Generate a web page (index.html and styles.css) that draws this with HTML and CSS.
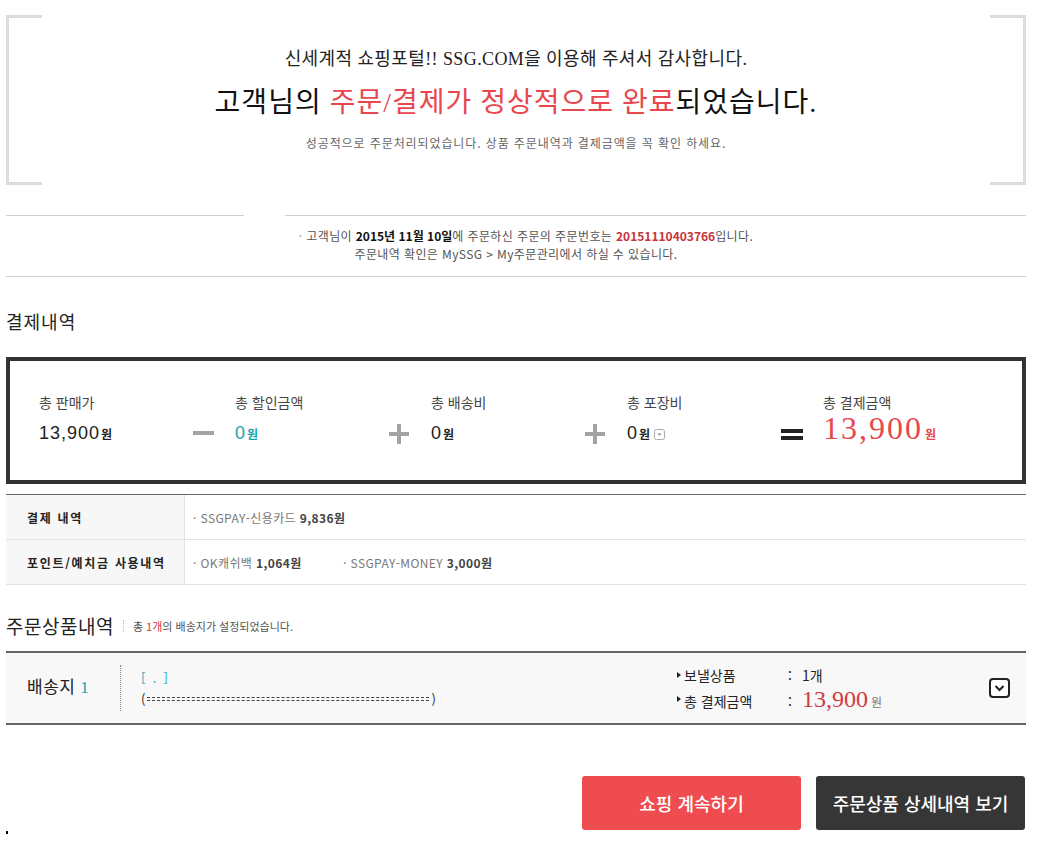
FILE: index.html
```html
<!DOCTYPE html>
<html lang="ko">
<head>
<meta charset="utf-8">
<title>주문/결제 완료</title>
<link rel="stylesheet" href="styles.css">
</head>
<body>
<div class="page">
  <section class="hero">
    <div class="br br-l"></div>
    <div class="hero-body">
      <p class="hero-1">신세계적 쇼핑포털!! SSG.COM을 이용해 주셔서 감사합니다.</p>
      <h1 class="hero-2">고객님의 <em>주문/결제가 정상적으로 완료</em>되었습니다.</h1>
      <p class="hero-3">성공적으로 주문처리되었습니다. 상품 주문내역과 결제금액을 꼭 확인 하세요.</p>
    </div>
    <div class="br br-r"></div>
  </section>

  <div class="rule"><span class="rule-a"></span><span class="rule-b"></span></div>
  <div class="info">
    <p><span class="dotc">·</span> 고객님이 <b>2015년 11월 10일</b>에 주문하신 주문의 주문번호는 <b class="no">20151110403766</b>입니다.</p>
    <p>주문내역 확인은 MySSG &gt; My주문관리에서 하실 수 있습니다.</p>
  </div>

  <h2 class="sec">결제내역</h2>

  <div class="sum">
    <div class="col">
      <div class="lbl">총 판매가</div>
      <div class="val">13,900<span class="won">원</span></div>
    </div>
    <div class="op"><span class="minus"></span></div>
    <div class="col">
      <div class="lbl">총 할인금액</div>
      <div class="val teal">0<span class="won">원</span></div>
    </div>
    <div class="op"><span class="plus"></span></div>
    <div class="col">
      <div class="lbl">총 배송비</div>
      <div class="val">0<span class="won">원</span></div>
    </div>
    <div class="op"><span class="plus"></span></div>
    <div class="col">
      <div class="lbl">총 포장비</div>
      <div class="val">0<span class="won">원</span><span class="dd"><svg width="11" height="11" viewBox="0 0 11 11"><rect x="0.5" y="0.5" width="10" height="10" rx="2" fill="#fff" stroke="#aaa"/><path d="M3.5 4.5h4l-2 2.2z" fill="#888"/></svg></span></div>
    </div>
    <div class="op"><span class="eq"></span></div>
    <div class="col col-total">
      <div class="lbl">총 결제금액</div>
      <div class="val"><span class="big">13,900</span><span class="won red">원</span></div>
    </div>
  </div>

  <div class="pay">
    <div class="pay-row">
      <div class="pay-th">결제 내역</div>
      <div class="pay-td"><span class="item">· SSGPAY-신용카드 <b>9,836원</b></span></div>
    </div>
    <div class="pay-row">
      <div class="pay-th">포인트/예치금 사용내역</div>
      <div class="pay-td"><span class="item item-w">· OK캐쉬백 <b>1,064원</b></span><span class="item">· SSGPAY-MONEY <b>3,000원</b></span></div>
    </div>
  </div>

  <div class="sec2">
    <h2 class="sec sec-b">주문상품내역</h2>
    <p class="note">총 <span class="r">1개</span>의 배송지가 설정되었습니다.</p>
  </div>

  <div class="dlv">
    <div class="dlv-name">배송지 <span class="num">1</span></div>
    <div class="dlv-sep"></div>
    <div class="dlv-addr">
      <p class="addr-1">[&nbsp;&nbsp;.&nbsp;&nbsp;]</p>
      <p class="addr-2">(<span class="mask"></span>)</p>
    </div>
    <div class="dlv-sum">
      <p class="srow"><span class="tri"></span><span class="sk">보낼상품</span><span class="colon">:</span><span class="sv">1개</span></p>
      <p class="srow"><span class="tri"></span><span class="sk">총 결제금액</span><span class="colon">:</span><span class="price">13,900</span><span class="pwon">원</span></p>
    </div>
    <div class="toggle"><svg width="21" height="20" viewBox="0 0 21 20"><rect x="1" y="1" width="19" height="18" rx="3" fill="#fff" stroke="#222" stroke-width="2"/><path d="M6.5 8l4 4 4-4" fill="none" stroke="#222" stroke-width="2"/></svg></div>
  </div>

  <div class="btns">
    <a class="btn btn-red">쇼핑 계속하기</a>
    <a class="btn btn-dark">주문상품 상세내역 보기</a>
  </div>
  <div class="dot"></div>
</div>
</body>
</html>
```
FILE: styles.css
```css
* { box-sizing: border-box; }
body {
  margin: 0;
  background: #fff;
  color: #222;
  font-family: "Noto Sans CJK KR", "Noto Sans", sans-serif;
}
p { margin: 0; }
.page { width: 1020px; margin: 15px 0 0 6px; }

/* hero */
.hero { display: flex; height: 170px; }
.br { width: 36px; border: 3px solid #dcdcdc; }
.br-l { border-right: 0; }
.br-r { border-left: 0; }
.hero-body { flex: 1; text-align: center; padding-top: 32px; }
.hero-1 { font: 18px/24px "Liberation Serif", "Noto Sans CJK KR", serif; letter-spacing: 0.4px; color: #222; }
.hero-2 { margin: 14px 0 0; font: 28px/36px "Liberation Serif", "Noto Sans CJK KR", serif; letter-spacing: 1px; font-weight: normal; color: #111; }
.hero-2 em { font-style: normal; color: #e8474d; }
.hero-3 { margin-top: 13px; font-size: 12px; line-height: 18px; letter-spacing: 0.9px; color: #666; }

/* info */
.rule { display: flex; justify-content: space-between; margin-top: 30px; }
.rule span { height: 1px; background: #cfcfcf; }
.rule-a { width: 238px; }
.rule-b { width: 741px; }
.info { text-align: center; font-size: 12px; line-height: 18px; letter-spacing: 0.4px; color: #555; padding: 11px 0 13px; border-bottom: 1px solid #cfcfcf; }
.info p:first-child { padding-left: 20px; }
.info b { color: #111; letter-spacing: 0; }
.info b.no { color: #c8323a; }
.dotc { color: #999; }

.sec { margin: 32px 0 0; font-size: 18px; line-height: 24px; letter-spacing: 1px; font-weight: normal; color: #222; }

/* summary box */
.sum { margin-top: 24px; border: 4px solid #333; display: flex; padding: 31px 0 32px 29px; }
.col { width: 154px; }
.col-total { flex: 1; }
.lbl { font-size: 14px; line-height: 20px; color: #444; }
.val { margin-top: 6px; height: 30px; font: 18px/30px "Liberation Sans", "Noto Sans CJK KR", sans-serif; letter-spacing: 1px; color: #222; white-space: nowrap; }
.won { font-family: "Noto Sans CJK KR", sans-serif; font-size: 12px; font-weight: bold; letter-spacing: 0; margin-left: 1px; }
.teal { color: #17a3ad; }
.big { font: 32px/16px "Liberation Serif", serif; letter-spacing: 2px; color: #e8474d; }
.won.red { color: #e8474d; margin-left: 2px; }
.dd { display: inline-block; margin-left: 4px; vertical-align: -1px; line-height: 0; }
.op { width: 42px; align-self: flex-end; height: 30px; display: flex; align-items: center; }
.minus { width: 21px; height: 4px; background: #a3a3a3; }
.plus { width: 20px; height: 20px; background:
  linear-gradient(#a3a3a3, #a3a3a3) center / 20px 4px no-repeat,
  linear-gradient(#a3a3a3, #a3a3a3) center / 4px 20px no-repeat; margin-top: 1px; }
.eq { width: 22px; height: 11px; border-top: 4px solid #222; border-bottom: 4px solid #222; margin-top: 2px; }

/* pay detail table */
.pay { margin-top: 10px; border-top: 1px solid #666; }
.pay-row { display: flex; height: 45px; border-bottom: 1px solid #e2e2e2; }
.pay-th { width: 179px; background: #f7f7f7; border-right: 1px solid #e2e2e2; padding-left: 21px; display: flex; align-items: center; font-size: 12px; font-weight: bold; letter-spacing: 1.7px; color: #222; }
.pay-td { flex: 1; display: flex; align-items: center; padding-left: 8px; font-size: 12px; letter-spacing: 0.4px; color: #777; }
.pay-td b { color: #444; }
.item-w { width: 150px; }

/* order items */
.sec2 { display: flex; align-items: center; margin-top: 29px; }
.sec-b { margin: 0; font-size: 19px; letter-spacing: 0.5px; }
.note { margin-left: 9px; padding-left: 9px; border-left: 1px dotted #bbb; font-size: 11px; line-height: 12px; color: #555; }
.note .r { color: #d0393e; }

.dlv { margin-top: 13px; height: 74px; border-top: 2px solid #666; border-bottom: 2px solid #666; background: #f8f8f8; display: flex; align-items: center; }
.dlv-name { width: 114px; padding-left: 21px; font: 17px/24px "Liberation Serif", "Noto Sans CJK KR", serif; letter-spacing: 0.5px; color: #222; }
.dlv-name .num { color: #1fa0b0; }
.dlv-sep { height: 46px; border-left: 1px dotted #888; }
.dlv-addr { flex: 1; padding-left: 20px; font-size: 13px; line-height: 21px; color: #333; }
.addr-1 { color: #2aa7c2; }
.addr-2 { display: flex; align-items: center; }
.mask { display: inline-block; width: 282px; height: 4px; border-top: 1px dashed #444; border-bottom: 1px dashed #444; margin: 0 2px; }
.dlv-sum { width: 312px; margin-top: -2px; }
.srow { display: flex; align-items: baseline; height: 24px; line-height: 24px; font-size: 14px; color: #222; }
.tri { width: 0; height: 0; border-left: 4px solid #222; border-top: 3.5px solid transparent; border-bottom: 3.5px solid transparent; margin-right: 3px; align-self: center; }
.sk { width: 104px; }
.colon { width: 14px; }
.price { font: 24px/24px "Liberation Serif", serif; color: #d33a3f; }
.pwon { font-size: 12px; color: #777; margin-left: 3px; }
.toggle { width: 21px; height: 20px; margin-right: 16px; line-height: 0; }

/* buttons */
.btns { display: flex; justify-content: flex-end; gap: 15px; margin-top: 51px; padding-right: 1px; }
.btn { height: 54px; border-radius: 3px; display: flex; align-items: center; justify-content: center; color: #fff; font-size: 18px; font-weight: 500; text-decoration: none; }
.btn-red { width: 219px; background: #ef4c4f; }
.btn-dark { width: 209px; background: #363636; }
.dot { width: 2px; height: 3px; background: #000; margin-top: 1px; }
```
